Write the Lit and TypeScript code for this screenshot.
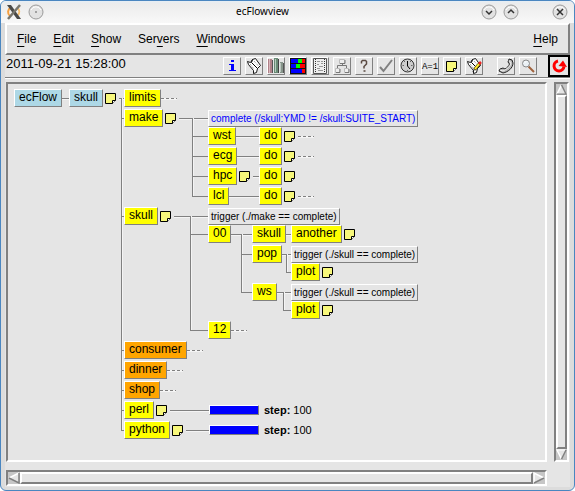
import { LitElement, html, css, svg, nothing, TemplateResult } from "lit";
import { customElement, property } from "lit/decorators.js";
import { classMap } from "lit/directives/class-map.js";

interface TreeNode {
  label: string;
  kind?: "node" | "expr" | "meter";
  tone?: "server" | "complete" | "queued";
  blue?: boolean;
  note?: boolean;
  folded?: boolean;
  /** Distance from the left edge of this node to its children. */
  span?: number;
  /** Distance from the trunk line to the children. */
  stub?: number;
  value?: number;
  children?: TreeNode[];
}

const doNode = (folded: boolean): TreeNode => ({ label: "do", note: true, folded });
const plot: TreeNode = { label: "plot", note: true };
const waitSkull: TreeNode = { label: "trigger (./skull == complete)", kind: "expr" };

const tree: TreeNode = {
  label: "ecFlow", tone: "server", span: 55, stub: 0,
  children: [{
    label: "skull", tone: "server", note: true, span: 55, stub: 3,
    children: [
      { label: "limits", folded: true },
      {
        label: "make", note: true, span: 84, stub: 16,
        children: [
          { label: "complete (/skull:YMD != /skull:SUITE_START)", kind: "expr", blue: true },
          { label: "wst", span: 51, children: [doNode(true)] },
          { label: "ecg", span: 51, children: [doNode(true)] },
          { label: "hpc", span: 51, note: true, children: [doNode(false)] },
          { label: "lcl", span: 51, children: [doNode(true)] },
        ],
      },
      {
        label: "skull", note: true, span: 84, stub: 18,
        children: [
          { label: "trigger (./make == complete)", kind: "expr" },
          {
            label: "00", span: 44, stub: 11,
            children: [
              { label: "skull", span: 39, children: [{ label: "another", note: true }] },
              { label: "pop", span: 39, stub: 5, children: [waitSkull, plot] },
              { label: "ws", span: 39, stub: 8, children: [waitSkull, plot] },
            ],
          },
          { label: "12", folded: true },
        ],
      },
      { label: "consumer", tone: "queued", folded: true },
      { label: "dinner", tone: "queued", folded: true },
      { label: "shop", tone: "queued", folded: true },
      { label: "perl", note: true, span: 85, children: [{ label: "step", kind: "meter", value: 100 }] },
      { label: "python", note: true, span: 85, children: [{ label: "step", kind: "meter", value: 100 }] },
    ],
  }],
};

const noteShape = svg`
  <path d="M.5.5H10.5V7.5L7.5 10.5H.5Z" fill="#f7f77b" stroke="#000"/>
  <path d="M7.5 10.5V7.5H10.5" fill="#fff" stroke="#000"/>`;

const noteIcon = html`<svg class="note" viewBox="0 0 11 11" aria-hidden="true">${noteShape}</svg>`;

@customElement("flow-tree")
export class FlowTree extends LitElement {
  @property({ attribute: false }) root?: TreeNode;

  static styles = css`
    :host { display: block; font: 12px/16px "Liberation Sans", Arial, sans-serif; color: #000; }
    ul, li { list-style: none; margin: 0; padding: 0; }
    .branch { display: flex; align-items: flex-start; position: relative; white-space: nowrap; }
    .head { display: flex; flex: none; height: 20px; }
    .head.wide { width: var(--span); }
    .chip {
      box-sizing: border-box; height: 18px; padding: 0 4px; line-height: 14px;
      border: 1px solid; border-color: #fff #808080 #808080 #fff; background: #ff0;
    }
    .server { background: #add8e6; }
    .queued { background: #ffa500; }
    .note { width: 11px; height: 11px; margin: 4px 3px 0 2px; flex: none; }
    .link { flex: 1; height: 1px; margin-top: 9px; background: #808080; border-bottom: 1px solid #f4f4f4; }
    .fold {
      width: 16px; height: 1px; margin-top: 9px; border-bottom: 1px solid #f4f4f4;
      background: repeating-linear-gradient(90deg, #808080 0 3px, #f4f4f4 3px 5px);
    }
    .kids.trunk > .branch::before {
      content: ""; position: absolute; left: calc(-1 * var(--stub)); top: 0; bottom: 0;
      width: 1px; background: #808080; border-right: 1px solid #f4f4f4;
    }
    .kids.trunk > .branch:first-child::before { top: 9px; }
    .kids.trunk > .branch:last-child::before { bottom: auto; height: 10px; }
    .kids.trunk > .branch:not(:first-child)::after {
      content: ""; position: absolute; left: calc(-1 * var(--stub)); top: 9px;
      width: var(--stub); height: 1px; background: #808080;
    }
    .expr {
      box-sizing: border-box; height: 17px; margin-top: 1px; padding: 0 2px; font-size: 10px; line-height: 15px;
      border: 1px solid; border-color: #fff #808080 #808080 #fff;
    }
    .blue { color: #00f; }
    .meter { display: flex; align-items: center; height: 18px; gap: 5px; font-size: 11px; }
    .bar { width: 50px; height: 10px; box-sizing: border-box; background: #ccc; border: 1px solid; border-color: #fff #808080 #808080 #fff; }
    .fill { height: 100%; background: #00f; }
  `;

  private head(n: TreeNode): TemplateResult {
    if (n.kind === "expr") {
      return html`<div class=${classMap({ expr: true, blue: !!n.blue })}>${n.label}</div>`;
    }
    if (n.kind === "meter") {
      return html`<div class="meter">
        <div class="bar"><div class="fill" style="width:${n.value}%"></div></div>
        <span><b>${n.label}:</b> ${n.value}</span>
      </div>`;
    }
    return html`<div class=${classMap({ head: true, wide: !!n.span })} style=${n.span ? `--span:${n.span}px` : nothing}>
      <span class="chip ${n.tone ?? "complete"}">${n.label}</span>
      ${n.note ? noteIcon : nothing}
      ${n.children ? html`<span class="link"></span>` : nothing}
      ${n.folded ? html`<span class="fold"></span>` : nothing}
    </div>`;
  }

  private branch(n: TreeNode): TemplateResult {
    return html`<li class="branch">
      ${this.head(n)}
      ${n.children
        ? html`<ul class=${classMap({ kids: true, trunk: !!n.stub })} style="--stub:${n.stub ?? 0}px">
            ${n.children.map((c) => this.branch(c))}
          </ul>`
        : nothing}
    </li>`;
  }

  render() {
    return this.root ? html`<ul>${this.branch(this.root)}</ul>` : nothing;
  }
}

const scroll = svg`
  <path d="M7.5 2.500L10.500 1.500L15.500 8.500L12.500 11.500L11.500 15.500L8.500 16.500L8.500 13.500L3.500 7.500L2.500 4.500L5.500 5.500Z" fill="#fff" stroke="#000" stroke-width=".9"/>
  <path d="M7.500 2.500L6.500 5.500L12.500 11.500" fill="none" stroke="#000"/>
  <path d="M9 4L13.500 9M5 7L9 12" fill="none" stroke="#888" stroke-dasharray="1 1"/>`;

const tools: { name: string; art: TemplateResult | ReturnType<typeof svg>; apart?: boolean }[] = [
  { name: "Info", art: svg`<path d="M8 3h3v2H8zM6 7h5v6h2v1H6v-1h2V8H6z" fill="#00f"/>` },
  { name: "Script", art: scroll },
  { name: "Manual", art: svg`
    <path d="M1 2h4v14H1z" fill="#b08088"/><path d="M2 2h1v14H2z" fill="#d8b8bc"/><path d="M5 3h1v13H5z" fill="#555"/>
    <path d="M7 1h4v15H7z" fill="#6a8a76"/><path d="M8 2h1v13H8z" fill="#b4ccbc"/><path d="M11 2h1v14h-1z" fill="#444"/>
    <path d="M13 5h3v11h-3z" fill="#87958b"/><path d="M13 6h1v9h-1z" fill="#bcc8c0"/><path d="M16 6h1v10h-1z" fill="#555"/>` },
  { name: "Output", art: svg`
    <path d="M1 1h16v16H1z" fill="#111"/>
    <path d="M2 2h7v4H2zM2 7h5v4H2zM2 12h11v4H2z" fill="#00f"/>
    <path d="M9 2h4v4H9zM7 7h4v4H7z" fill="#0f0"/><path d="M13 2h3v4h-3zM11 7h5v4h-5zM13 12h3v4h-3z" fill="#f00"/>` },
  { name: "Job", art: svg`
    <path d="M2.500 1.500H15.500V16.500H2.500Z" fill="#eee" stroke="#555"/>
    <path d="M4.500 2V16M13.500 2V16" stroke="#333" stroke-dasharray="1 1"/>
    <path d="M6 4.500H9M10 6.500H12M6 7.500H8M8 9.500H12M6 11.500H9M7 13.500H12M10 4.500H12" stroke="#999"/>` },
  { name: "Triggers", art: svg`
    <path d="M6.500 2.500H11.500V6.500H6.500ZM2.500 11.500H6.500V15.500H2.500ZM11.500 11.500H15.500V15.500H11.500Z" fill="#eee" stroke="#bbb"/>
    <path d="M9.500 7V8.500M4.500 11V8.500H13.500V11M7 6.500H12V3M3 15.500H7V12M12 15.500H16V12" fill="none" stroke="#777"/>` },
  { name: "Why", art: svg`<path d="M6.500 6.500V4.500L7.500 3.500H10.500L11.500 4.500V7L9 9.500V11.500M8.500 14H10.500" fill="none" stroke="#5a4a42" stroke-width="1.500"/>` },
  { name: "Check", art: svg`<path d="M3 10L6.500 14L15 3" fill="none" stroke="#808080" stroke-width="2"/>` },
  { name: "Time line", art: svg`
    <circle cx="8.500" cy="8.500" r="6.500" fill="#ccc" stroke="#333"/>
    <path d="M8.500 4V9L11 12" fill="none" stroke="#000"/><path d="M5.500 4V5M11.500 4V5M3.500 8.500H5M12 8.500H13.500M8.500 13V14" stroke="#666"/>` },
  { name: "Variables", art: svg`<text class="tiny" x="9" y="12" text-anchor="middle">A=1</text>` },
  { name: "Messages", art: svg`<g transform="translate(3 4)">${noteShape}</g>` },
  { name: "Edit script", art: svg`${scroll}
    <path d="M9.500 12.500L15 6" stroke="#554400" stroke-width="3"/><path d="M10 12L14 7" stroke="#fe3" stroke-width="2"/>
    <path d="M14 7L16 5" stroke="#e22" stroke-width="2.500"/><path d="M7 15L10 13L9 12Z" fill="#222"/>` },
  { name: "Call", apart: true, art: svg`
    <path d="M12 2L15 3L16 6C16 11 11 15 6 16L2 14L3 12L6 11L8 12C10 11 12 9 12.500 7L11 5Z" fill="#b8b8b8" stroke="#222"/>
    <path d="M12 3.500L14 6C13 10 10 12 6 14L3 13" fill="none" stroke="#eee"/>` },
  { name: "Search", art: svg`
    <path d="M9.500 9.500L15 15" stroke="#a0623d" stroke-width="2"/>
    <circle cx="7" cy="6.500" r="3.500" fill="#eaf0f4" stroke="#888"/><path d="M5.500 5.500L7.500 4.500" stroke="#fff"/>` },
];

const arrows = {
  up: { body: "M6 1L11 11H1Z", light: "M1 11L6 1", dark: "M6 1L11 11H1" },
  down: { body: "M1 1H11L6 11Z", light: "M11 1H1L6 11", dark: "M6 11L11 1" },
  left: { body: "M1 6L11 1V11Z", light: "M1 6L11 1", dark: "M11 1V11L1 6" },
  right: { body: "M1 1L11 6L1 11Z", light: "M1 11V1L11 6", dark: "M11 6L1 11" },
};

@customElement("app-root")
export class AppRoot extends LitElement {
  static styles = css`
    :host { display: block; font: 12px/16px "Liberation Sans", Arial, sans-serif; color: #000; background: #fff; }
    .window {
      box-sizing: border-box; min-height: 100vh; display: flex; flex-direction: column;
      border: 1px solid #4a86c0; border-radius: 6px; background: #dcdcdc; padding: 0 4px 4px; overflow: hidden;
    }
    .title {
      display: flex; align-items: center; height: 22px; margin: 0 -4px; padding: 0 6px 0 5px; gap: 6px;
      background: linear-gradient(#e6eef5, #ececec 3px, #f8f8f8);
    }
    .title h1 { flex: 1; margin: 0 0 2px; text-align: center; font: 10px/16px "Noto Sans", sans-serif; }
    .logo, .round svg { display: block; }
    .round { width: 16px; height: 16px; padding: 0; border: 0; background: none; border-radius: 8px; }
    .round.close { margin-left: 27px; }
    .menu {
      display: flex; align-items: center; height: 28px; padding: 0 10px; background: #e5e5e5;
      border: 2px solid; border-color: #fff #808080 #808080 #fff; gap: 17px;
    }
    .menu button { border: 0; padding: 0; background: none; font: inherit; color: inherit; }
    .menu u { text-underline-offset: 3px; text-decoration-thickness: 1px; }
    .menu .help { margin-left: auto; }
    .tools { display: flex; align-items: center; gap: 4px; height: 22px; padding-left: 1px; background: #e5e5e5; border-bottom: 1px solid #808080; }
    .clock { flex: 1; font-size: 13px; margin-bottom: 4px; }
    .tool {
      box-sizing: border-box; width: 18px; height: 18px; padding: 0; background: #e5e5e5;
      border: 1px solid; border-color: #fff #808080 #808080 #fff;
    }
    .tool svg { display: block; margin: -1px; }
    .apart { margin-left: 10px; }
    .tool.reload { width: 22px; height: 22px; border: 2px solid #000; margin-left: 7px; }
    .tool.reload svg { margin: 0; }
    .tiny { font: 9px "Liberation Mono", monospace; }
    .work {
      flex: 1; display: grid; grid-template: 1fr 16px / minmax(0, 1fr) 15px; gap: 8px 7px;
      padding: 3px 1px 1px; background: #e5e5e5; border-top: 1px solid #fff; margin-bottom: -1px;
    }
    .canvas { border: 2px solid; border-color: #808080 #fff #fff #808080; padding: 5px 6px; overflow: hidden; }
    .scroll { display: flex; box-sizing: border-box; border: 2px solid; border-color: #808080 #fff #fff #808080; background: #c6c6c6; }
    .scroll.v { flex-direction: column; }
    .thumb { flex: 1; background: #e5e5e5; border: 2px solid; border-color: #fff #808080 #808080 #fff; }
    .scroll svg { flex: none; display: block; }
  `;

  private round(name: string, d: string, extra = "") {
    return html`<button class="round ${extra}" aria-label=${name}>
      <svg width="16" height="16" viewBox="0 0 16 16">
        <circle cx="8" cy="8" r="7" fill="#e2e2e2" stroke="#9a9a9a"/>
        <path d="M3 6A5.500 5.500 0 0 1 13 6" fill="none" stroke="#fff"/>
        <path d=${d} fill="none" stroke="#333" stroke-width="1.500"/>
      </svg></button>`;
  }

  private menuItem(before: string, key: string, after: string, extra = "") {
    return html`<button class=${extra}>${before}<u>${key}</u>${after}</button>`;
  }

  private arrow(way: keyof typeof arrows) {
    const a = arrows[way];
    return html`<svg width=${way === "up" || way === "down" ? 11 : 12} height=${way === "up" || way === "down" ? 11 : 12} viewBox="0 0 12 12" aria-hidden="true">
      <path d=${a.body} fill="#e5e5e5"/>
      <path d=${a.light} fill="none" stroke="#fff" stroke-width="1.500"/>
      <path d=${a.dark} fill="none" stroke="#808080" stroke-width="1.500"/>
    </svg>`;
  }

  render() {
    return html`<div class="window">
      <header class="title">
        <svg class="logo" width="16" height="16" viewBox="0 0 16 16" aria-hidden="true">
          <path d="M5 3.500A5 5 0 0 0 4 12" fill="none" stroke="#f6a040" stroke-width="2"/>
          <path d="M11.500 4A5 5 0 0 1 12 11" fill="none" stroke="#f8c070" stroke-width="2"/>
          <path d="M1 1H5L15 15H11Z" fill="#4a4a48"/><path d="M14 1L2 15" stroke="#77756c" stroke-width="2.500"/>
        </svg>
        ${this.round("Window menu", "M7.500 8H8.500")}
        <h1>ecFlowview</h1>
        ${this.round("Minimize", "M5 7L8 10L11 7")}
        ${this.round("Maximize", "M5 9L8 6L11 9")}
        ${this.round("Close", "M5 5L11 11M11 5L5 11", "close")}
      </header>
      <nav class="menu">
        ${this.menuItem("", "F", "ile")}${this.menuItem("", "E", "dit")}${this.menuItem("", "S", "how")}
        ${this.menuItem("Ser", "v", "ers")}${this.menuItem("", "W", "indows")}${this.menuItem("", "H", "elp", "help")}
      </nav>
      <div class="tools">
        <time class="clock">2011-09-21 15:28:00</time>
        ${tools.map((t) => html`<button class=${classMap({ tool: true, apart: !!t.apart })} aria-label=${t.name}>
          <svg width="18" height="18" viewBox="0 0 18 18">${t.art}</svg></button>`)}
        <button class="tool reload" aria-label="Refresh">
          <svg width="18" height="18" viewBox="0 0 18 18">
            <path d="M8 4A5 5 0 1 0 14 9.500" fill="none" stroke="#f00" stroke-width="3"/>
            <path d="M8.500 9L13 3.500L17 10Z" fill="#f00"/>
          </svg></button>
      </div>
      <main class="work">
        <section class="canvas"><flow-tree .root=${tree}></flow-tree></section>
        <div class="scroll v">${this.arrow("up")}<div class="thumb"></div>${this.arrow("down")}</div>
        <div class="scroll">${this.arrow("left")}<div class="thumb"></div>${this.arrow("right")}</div>
      </main>
    </div>`;
  }
}
